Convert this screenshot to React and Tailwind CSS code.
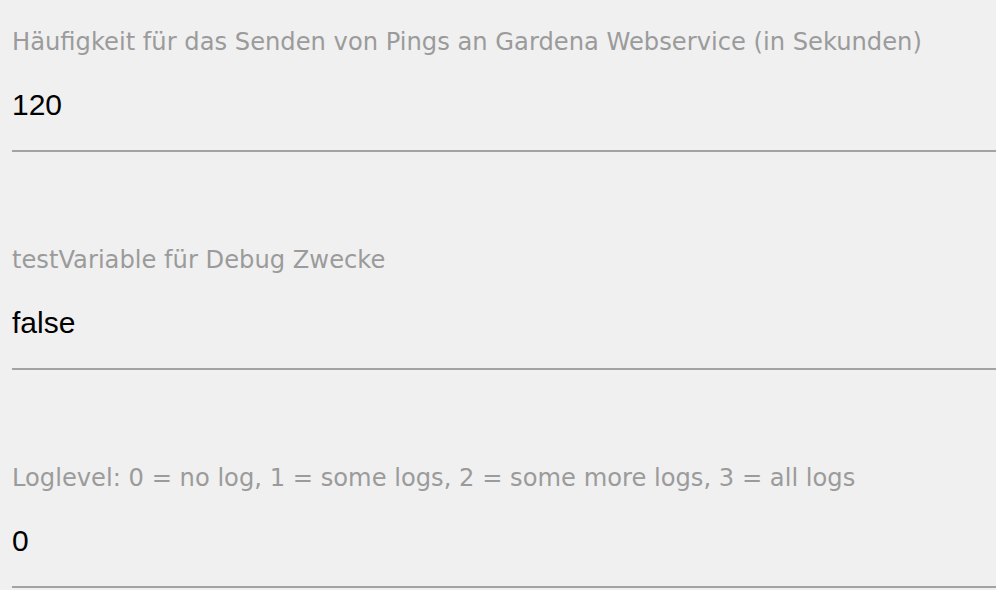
const FIELDS = [
  { label: 'Häufigkeit für das Senden von Pings an Gardena Webservice (in Sekunden)', value: '120' },
  { label: 'testVariable für Debug Zwecke', value: 'false' },
  { label: 'Loglevel: 0 = no log, 1 = some logs, 2 = some more logs, 3 = all logs', value: '0' },
];

export default function App() {
  return (
    <div className="w-[996px] h-[590px] overflow-hidden bg-[#f0f0f0] pl-[12px] pt-[28px]">
      {FIELDS.map((f) => (
        <div key={f.label} className="mb-[94px]">
          <div className="text-[24.2px] leading-[28px] text-[#9b9b9b] whitespace-nowrap font-['DejaVu_Sans',sans-serif]">
            {f.label}
          </div>
          <div className="mt-[31px] pb-[27px] border-b-2 border-[#a3a3a3] text-[30px] leading-[36px] text-black font-['Liberation_Sans',Arial,sans-serif]">
            {f.value}
          </div>
        </div>
      ))}
    </div>
  );
}
